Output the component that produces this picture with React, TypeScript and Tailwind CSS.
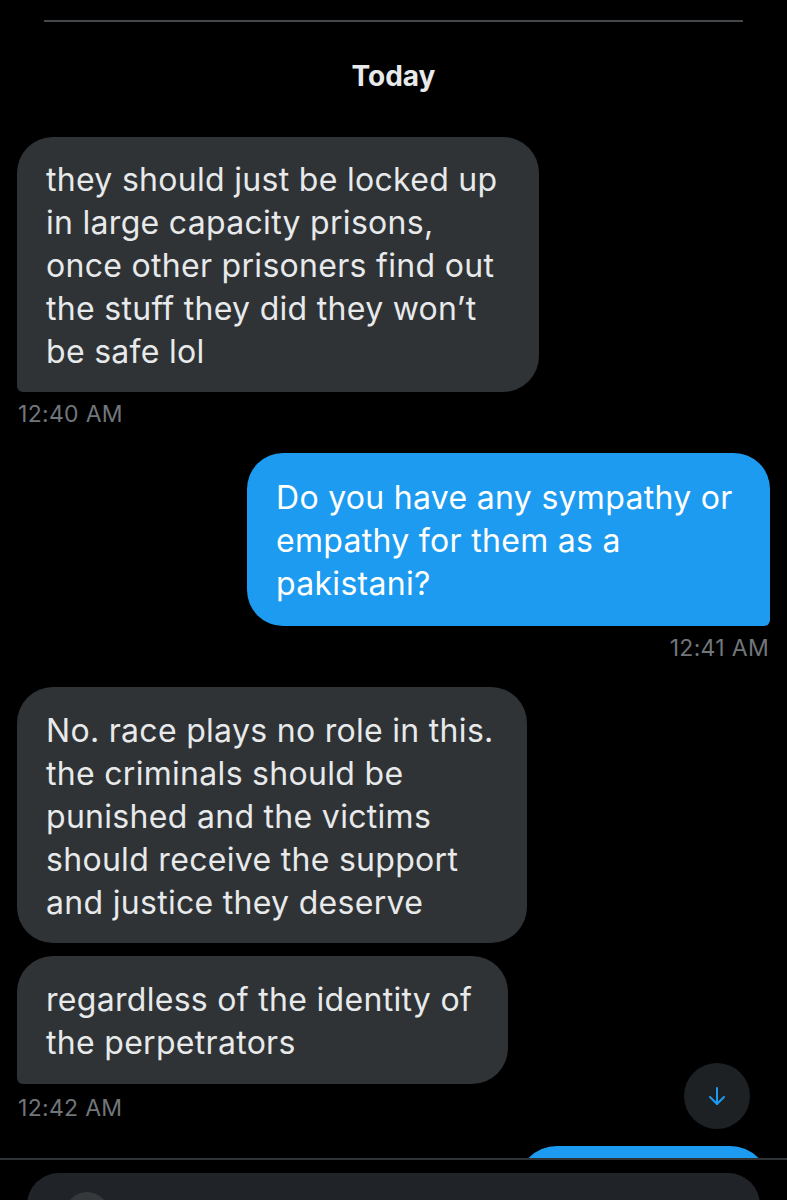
import React from "react";

const font = { fontFamily: "Inter, 'Noto Sans', sans-serif" };

interface BubbleProps {
  lines: string[];
  width: string;
  mine?: boolean;
  corner: string;
  pad: string;
}

function Bubble({ lines, width, mine, corner, pad }: BubbleProps) {
  return (
    <div
      className={`${width} ${corner} ${pad} pl-[29px] text-[32px] leading-[43px] tracking-[0.3px] ${
        mine ? "bg-[#1d9bf0] text-white self-end" : "bg-[#2f3336] text-[#e7e9ea] self-start"
      }`}
    >
      {lines.map((l) => (
        <div key={l} className="whitespace-nowrap">
          {l}
        </div>
      ))}
    </div>
  );
}

function Stamp({ time, right, mt }: { time: string; right?: boolean; mt: string }) {
  return (
    <div
      className={`${mt} text-[23px] leading-[28px] tracking-[0.3px] text-[#71767b] ${right ? "self-end pr-[1px]" : "self-start pl-[1px]"}`}
    >
      {time}
    </div>
  );
}

export default function App() {
  return (
    <div className="w-[787px] h-[1200px] bg-black overflow-hidden relative" style={font}>
      <div className="h-[1158px] overflow-hidden flex flex-col px-[17px]">
        <div className="mt-[20px] mx-[27px] h-[2px] bg-[#45484b] shrink-0" />
        <div className="mt-[38px] text-center text-[28px] leading-[32px] font-bold text-[#e7e9ea]">
          Today
        </div>

        <div className="mt-[45px] flex flex-col">
          <Bubble
            width="w-[522px]"
            corner="rounded-[36px] rounded-bl-[6px]"
            pad="pt-[21px] pb-[19px]"
            lines={[
              "they should just be locked up",
              "in large capacity prisons,",
              "once other prisoners find out",
              "the stuff they did they won’t",
              "be safe lol",
            ]}
          />
          <Stamp time="12:40 AM" mt="mt-[8px]" />

          <div className="mt-[25px] flex flex-col">
            <Bubble
              mine
              width="w-[523px]"
              corner="rounded-[36px] rounded-br-[6px]"
              pad="pt-[23px] pb-[21px]"
              lines={["Do you have any sympathy or", "empathy for them as a", "pakistani?"]}
            />
            <Stamp time="12:41 AM" right mt="mt-[8px]" />
          </div>

          <div className="mt-[25px] flex flex-col">
            <Bubble
              width="w-[510px]"
              corner="rounded-[36px]"
              pad="pt-[22px] pb-[19px]"
              lines={[
                "No. race plays no role in this.",
                "the criminals should be",
                "punished and the victims",
                "should receive the support",
                "and justice they deserve",
              ]}
            />
            <div className="mt-[13px] flex flex-col">
              <Bubble
                width="w-[491px]"
                corner="rounded-[36px] rounded-bl-[6px]"
                pad="pt-[22px] pb-[20px]"
                lines={["regardless of the identity of", "the perpetrators"]}
              />
            </div>
            <Stamp time="12:42 AM" mt="mt-[10px]" />
          </div>

          <div className="mt-[24px] self-end w-[253px] h-[80px] rounded-[40px] bg-[#1d9bf0]" />
        </div>
      </div>

      <div className="h-[2px] bg-[#2f3336]" />

      <div className="mt-[13px] ml-[27px] w-[733px] h-[80px] rounded-t-[32px] bg-[#202327] pl-[38px] pt-[19px]">
        <div className="w-[44px] h-[44px] rounded-full bg-[#36393c]" />
      </div>

      <button className="absolute left-[684px] top-[1063px] w-[66px] h-[66px] rounded-full bg-[#1e2124] flex items-center justify-center">
        <svg width="24" height="24" viewBox="0 0 24 24" fill="none" stroke="#1d9bf0" strokeWidth="2" strokeLinecap="round" strokeLinejoin="round">
          <path d="M12 4v16" />
          <path d="M5 13l7 7 7-7" />
        </svg>
      </button>
    </div>
  );
}
